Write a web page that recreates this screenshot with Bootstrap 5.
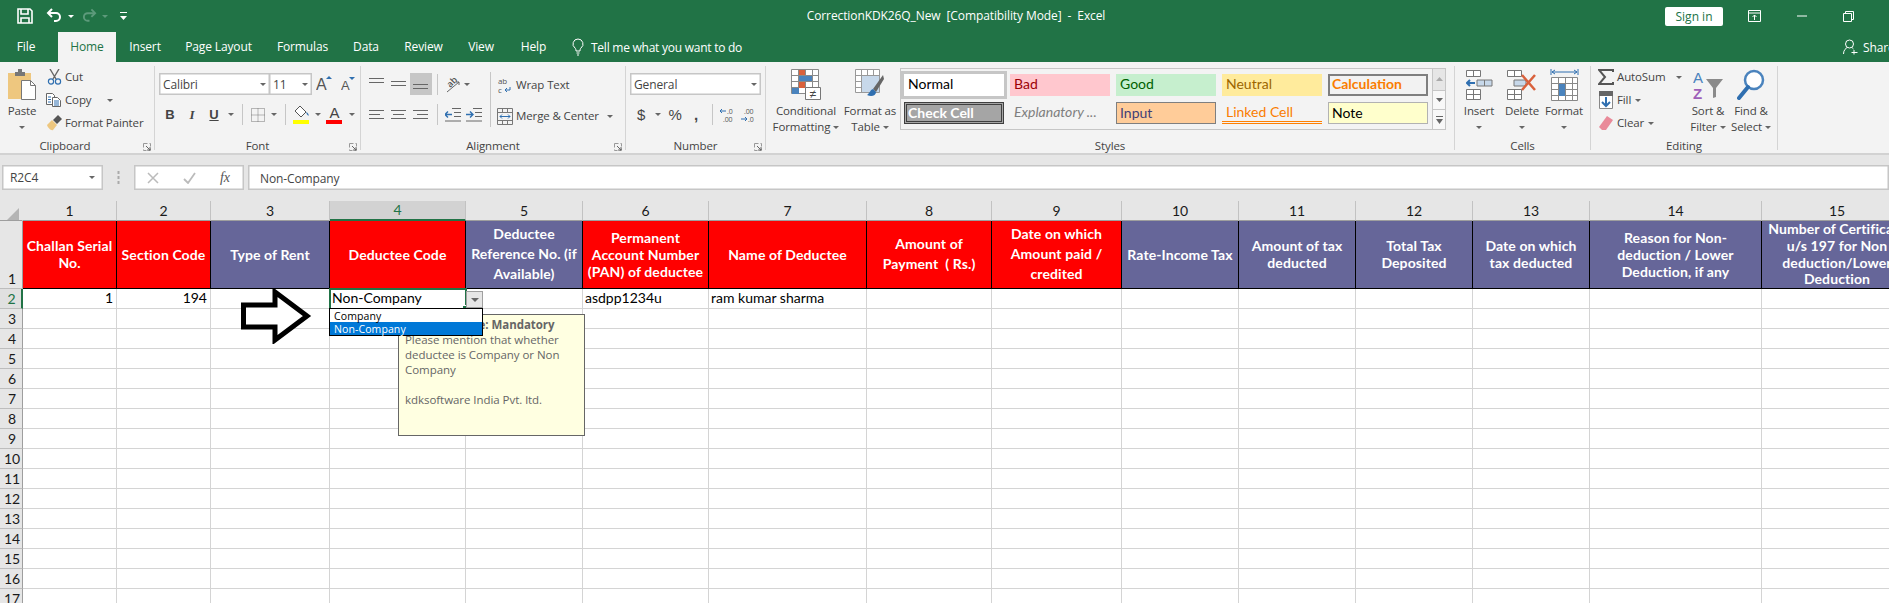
<!DOCTYPE html>
<html lang="en">
<head>
<meta charset="utf-8">
<title>CorrectionKDK26Q_New - Excel</title>
<link href="https://cdn.jsdelivr.net/npm/bootstrap@5.3.0/dist/css/bootstrap.min.css" rel="stylesheet">
<style>
html,body{height:603px;overflow:hidden;background:#fff}
body{font-family:"Open Sans","Noto Sans",sans-serif;font-size:11.5px;letter-spacing:-.12px;color:#444;width:1889px;line-height:16px}
svg{display:block;flex:none}
.tri{display:inline-block;width:0;height:0;border-left:3px solid transparent;border-right:3px solid transparent;border-top:3px solid #666;flex:none}
.tri-w{border-top-color:#fff}
.tri-d{border-top-color:#5d9a7b}
.cw-5{width:5px;flex:none}.cw-8{width:8px;flex:none}.cw-6{width:6px;flex:none}.cw-13{width:13px;flex:none}
.cw-10{width:10px}.cw-12{width:12px}.cw-18{width:18px}.cw-19{width:19px}.cw-20{width:20px}.cw-21{width:21px}.cw-22{width:22px}.cw-23{width:23px}.cw-25{width:25px}
.cw-10,.cw-12,.cw-18,.cw-19,.cw-20,.cw-21,.cw-22,.cw-23,.cw-25{display:flex;align-items:center;justify-content:center;flex:none;height:100%}
/* title */
.xl-top{background:#217346;color:#fff;height:62px}
.xl-title{height:32px;font-size:12px;letter-spacing:-.1px}
.xl-qat{width:634px;padding-left:17px}
.xl-doc{width:644px;text-align:center;line-height:28px}
.xl-signin{width:58px;height:19px;margin-left:387px;padding:0;border:0;border-radius:2px;background:#fff;color:#217346;font-size:12px;line-height:19px;letter-spacing:0}
.xl-win{width:47px;justify-content:center}
.xl-tabs{height:30px;flex-wrap:nowrap}
.xl-tabs .nav-link{color:#fff;padding:0;height:30px;line-height:29px;text-align:center;font-size:12px}
.xl-tabs .nav-link.active{background:#f3f3f3;color:#217346}
.t-file{width:52px;margin-right:6px}.t-home,.t-ins{width:58px}.t-pl{width:89px}.t-fm{width:79px}.t-da,.t-vw{width:48px}.t-rv{width:67px}.t-hp{width:57px}
.xl-tell{margin-left:8px;width:300px;color:#fff;font-size:12px;line-height:29px;letter-spacing:-.25px}
.xl-tell svg{margin-right:5px}
.xl-share{margin-left:auto;width:46px;overflow:hidden;white-space:nowrap;color:#fff;font-size:12px;line-height:29px}
.xl-share svg{margin-right:5px}
/* ribbon */
.xl-ribbon{height:93px;background:#f3f3f3;border-bottom:2px solid #d2d2d2;padding-top:4px}
.rg{flex:none;height:84px;border-right:1px solid #d4d4d4;position:relative;white-space:nowrap}
.rg-clip{width:155px}.rg-font{width:206px}.rg-align{width:265px}.rg-num{width:140px}.rg-sty{width:689px}.rg-cell{width:136px}.rg-edit{width:187px}
.rb{height:72px;display:flow-root}
.rl{height:12px;line-height:16px;text-align:center}
.launch{position:absolute;right:3px;bottom:-1px}
.big{display:flex;flex-direction:column;align-items:center;flex:none;line-height:16px;text-align:center}
.big-i{height:37px;display:flex;align-items:flex-start;padding-top:3px}
.big-l{display:flex;align-items:center;height:16px;gap:3px}
.big-c{height:16px;display:flex;align-items:center}
.w-paste{width:44px}.w-cf{width:70px;margin-left:5px}.w-ft{width:58px}.w-ins{width:42px;margin-left:3px}.w-del{width:44px}.w-fmt{width:40px}.w-sort{width:44px}.w-find{width:42px}
.sm-col{display:flex;flex-direction:column;gap:1px}
.sm{height:22px;display:flex;align-items:center}
.w-clipcol{width:111px}
.w-editcol{width:95px;padding-left:5px}
.sm .cw-20{margin-right:1px}
.r1{height:22px;margin-top:7px}
.r2{height:23px;margin-top:8px}
.cb{height:22px;background:#fff;border:1px solid #c6c6c6;display:flex;align-items:center;padding:1px 3px 0;justify-content:space-between;box-shadow:inset 0 0 0 .5px #c6c6c6;font-size:12px;font-family:"Open Sans",sans-serif}
.cb-font{width:111px;margin-left:4px}.cb-size{width:43px;margin-left:-1px}.cb-num{width:131px;margin-left:4px}
.vs{width:1px;height:21px;background:#c6c6c6}
.sel{background:#c6c6c6}
.al-l{width:129px;padding-left:5px}
.al-x{width:1px;height:55px;background:#c6c6c6;margin-top:6px;flex:none}
.al-r{padding-left:5px;padding-top:8px}
.al-r .sm{gap:2px}
.al-r .sm + .sm{margin-top:9px}
.w-mt{width:97px;display:flex;justify-content:space-between;align-items:center}
.fb{font-weight:700;font-size:13px;color:#444;font-family:"Liberation Sans",sans-serif}
.fi{font-style:italic;font-weight:700;font-size:13px;font-family:"Liberation Serif",serif}
.fu{text-decoration:underline}
.sym{font-size:15px;color:#444;font-family:"Liberation Sans",sans-serif}
/* gallery */
.gal{width:546px;height:62px;margin:2px 0 0 1px;border:1px solid #c6c6c6;display:flex;background:#f3f3f3}
.gal-g{width:531px;padding:5px 0 0 3px;display:grid;grid-template-columns:repeat(5,100px);grid-auto-rows:22px;column-gap:6px;row-gap:6px;font-family:Lato,sans-serif;font-size:14px;letter-spacing:0}
.gal-g>div{line-height:20px;padding-left:4px;overflow:hidden}
.s-n{background:#fff;color:#000;box-shadow:0 0 0 3px #c6c6c6}
.s-b{background:#ffc7ce;color:#9c0006}.s-g{background:#c6efce;color:#006100}.s-u{background:#ffeb9c;color:#9c6500}
.s-c{background:#f2f2f2;color:#fa7d00;font-weight:700;border:2px solid #7f7f7f;line-height:16px!important;padding-left:2px!important}
.s-k{background:#a5a5a5;color:#fff;font-weight:700;border:3px double #3f3f3f;line-height:16px!important;padding-left:1px!important}
.s-e{color:#7f7f7f;font-style:italic}
.s-i{background:#fc9;color:#3f3f76;border:1px solid #7f7f7f;line-height:19px!important;padding-left:3px!important}
.s-l{color:#fa7d00;border-bottom:3px double #ff8001}
.s-o{background:#ffc;color:#000;border:1px solid #b2b2b2;line-height:19px!important;padding-left:3px!important}
.gal-s{width:13px;margin-left:1px;border-left:1px solid #c6c6c6;display:flex;flex-direction:column}
.gal-s>div{flex:1;display:flex;align-items:center;justify-content:center;border-bottom:1px solid #c6c6c6;background:#f8f8f8}
.gal-s>div:first-child{background:#e6e6e6;flex:1.1}
.gal-s>div:last-child{border-bottom:0}
/* formula */
.xl-fbar{height:46px;background:#e6e6e6;padding-top:10px}
.nb{width:101px;height:25px;margin-left:2px;background:#fff;border:1px solid #c6c6c6;box-shadow:inset 0 0 0 .5px #c6c6c6;display:flex;align-items:center;justify-content:space-between;padding:0 7px;font-size:12px}
.gp{width:31px;display:flex;justify-content:center;align-items:center;height:25px}
.fxb{width:110px;height:25px;background:#fff;border:1px solid #c6c6c6;box-shadow:inset 0 0 0 .5px #c6c6c6;display:flex;align-items:center}
.fxb>div{width:36px;display:flex;justify-content:center;font-family:"Liberation Serif",serif;font-style:italic;font-size:14px;color:#555}
.fml{flex:1;height:25px;margin-left:4px;background:#fff;border:1px solid #c6c6c6;box-shadow:inset 0 0 0 .5px #c6c6c6;padding-left:11px;line-height:25px;font-size:12px}
/* sheet */
.xl-wrap{position:relative;height:402px;overflow:hidden;background:#fff}
.sheet{table-layout:fixed;width:1913px;margin:0;border-collapse:separate;border-spacing:0;font-family:Lato,sans-serif;font-size:14px;letter-spacing:0;color:#000}
.sheet col:nth-child(1){width:23px}.sheet col:nth-child(2),.sheet col:nth-child(3){width:94px}.sheet col:nth-child(4){width:119px}.sheet col:nth-child(5){width:136px}.sheet col:nth-child(6){width:117px}.sheet col:nth-child(7){width:126px}.sheet col:nth-child(8){width:158px}.sheet col:nth-child(9){width:125px}.sheet col:nth-child(10){width:130px}.sheet col:nth-child(11),.sheet col:nth-child(12),.sheet col:nth-child(13),.sheet col:nth-child(14){width:117px}.sheet col:nth-child(15){width:172px}.sheet col:nth-child(16){width:151px}
.sheet>*>tr>*{padding:0;height:20px;border:0;border-right:1px solid #d4d4d4;border-bottom:1px solid #d4d4d4;line-height:18px;vertical-align:middle;background:#fff;color:#000;box-shadow:none;overflow:hidden;white-space:nowrap}
.sheet>thead>tr>th{background:#e6e6e6;text-align:center;font-weight:400;border-right:1px solid #c2c2c2;border-bottom:1px solid #9e9e9e;color:#1a1a1a;padding-top:0}
.sheet>thead>tr>th.cor{position:relative;border-right-color:#e6e6e6}
.cor-t{display:block;width:0;height:0;margin:6px 0 0 7px;border-left:12px solid transparent;border-bottom:12px solid #b4b4b4}
.sheet>thead>tr>th.on{background:#d2d2d2;color:#217346;border-bottom:2px solid #217346}
.sheet>tbody>tr>th{background:#e6e6e6;text-align:center;font-weight:400;border-right:1px solid #9e9e9e;border-bottom:1px solid #bdbdbd;color:#1a1a1a;padding-left:2px}
.sheet>tbody>tr>th.on{color:#217346;border-right:2px solid #217346;background:#e0e0e0}
.sheet>tbody>tr.hd{height:68px}
.sheet>tbody>tr.hd>th{vertical-align:bottom;height:68px;line-height:19px}
.sheet>tbody>tr.hd>td{height:68px;border-right:1px solid #000;border-bottom:1px solid #000;color:#fff;font-weight:700;text-align:center;line-height:17px;letter-spacing:.1px;white-space:nowrap;padding-bottom:1px}
.sheet>tbody>tr.hd>td.rd{background:#f00}
.sheet>tbody>tr.hd>td.pu{background:#669}
.sheet>tbody>tr.hd>td.tl{line-height:20px}
.sheet>tbody>tr.hd>td.q4{line-height:16.75px;padding-bottom:0}
.sheet>tbody>tr>td.nr{text-align:right;padding-right:3px;padding-bottom:1px}
.sheet>tbody>tr>td.tx{padding-left:2px;padding-bottom:1px}
.sheet>tbody>tr>td.act{padding-left:2px;padding-bottom:1px;position:relative;overflow:visible;outline:2px solid #217346;outline-offset:-1px}
.fh{position:absolute;right:-3px;bottom:-3px;width:6px;height:6px;background:#217346;border:1px solid #fff}
.dd-btn{position:absolute;left:466px;top:90px;width:17px;height:17px;background:#e6e6e6;border:1px solid #a0a0a0;display:flex;align-items:center;justify-content:center}
.dd-btn .tri{border-left-width:4px;border-right-width:4px;border-top-width:4px;border-top-color:#666}
.dd-l{position:absolute;left:329px;top:107px;width:154px;height:28px;background:#fff;border:1px solid #000;font-family:"Open Sans",sans-serif;font-size:10.5px;line-height:14px;letter-spacing:.1px;color:#000;z-index:3}
.dd-l div{padding-left:4px;height:13px}
.dd-l .hit{background:#0078d7;color:#fff}
.tip{position:absolute;left:398px;top:113px;width:187px;height:122px;background:#ffffe1;border:1px solid #666;color:#666;padding:2px 6px;font-family:"Open Sans",sans-serif;font-size:11.5px;line-height:15px;letter-spacing:-.05px;z-index:2}
.tip b{display:block;padding-left:52px;font-weight:700}
.tip p{margin:0 0 15px}
.arr{position:absolute;left:240px;top:87px;z-index:1}
</style>
</head>
<body>
<svg class="d-none" width="0" height="0">
<symbol id="lA" viewBox="0 0 16 12"><path d="M0 1.5h15M0 5.5h11M0 9.5h15" stroke="#666" fill="none"/></symbol>
<symbol id="cA" viewBox="0 0 16 12"><path d="M0 1.5h15M2 5.5h11M0 9.5h15" stroke="#666" fill="none"/></symbol>
<symbol id="rA" viewBox="0 0 16 12"><path d="M0 1.5h15M4 5.5h11M0 9.5h15" stroke="#666" fill="none"/></symbol>
<symbol id="lc" viewBox="0 0 8 8"><path d="M.5 .5h7v7h-7z" fill="none" stroke="#999" stroke-dasharray="4 2"/><path d="M3 3l4 4M7 4v3H4" fill="none" stroke="#666"/></symbol>
</svg>

<header class="xl-top">
  <div class="xl-title d-flex align-items-center">
    <div class="xl-qat d-flex align-items-center">
      <svg width="16" height="16" viewBox="0 0 16 16"><path d="M1 1h12l2 2v12H1z" fill="none" stroke="#fff" stroke-width="1.6"/><path d="M4 1v5h7V1M4 15v-5h8v5" fill="none" stroke="#fff" stroke-width="1.6"/></svg>
      <div class="cw-13"></div>
      <svg width="16" height="16" viewBox="0 0 16 16"><path d="M3 5h7a4 4 0 0 1 0 8H8" fill="none" stroke="#fff" stroke-width="2"/><path d="M6 1L2 5l4 4" fill="none" stroke="#fff" stroke-width="2"/></svg>
      <div class="cw-6"></div><span class="tri tri-w"></span>
      <div class="cw-8"></div>
      <svg width="15" height="16" viewBox="0 0 16 16"><path d="M13 5H6a4 4 0 0 0 0 8h2" fill="none" stroke="#5d9a7b" stroke-width="2"/><path d="M10 1l4 4-4 4" fill="none" stroke="#5d9a7b" stroke-width="2"/></svg>
      <div class="cw-5"></div><span class="tri tri-d"></span>
      <div class="cw-12"></div>
      <svg width="7" height="9" viewBox="0 0 7 9"><path d="M0 .5h7" stroke="#fff"/><path d="M0 4h7L3.500 8z" fill="#fff"/></svg>
    </div>
    <div class="xl-doc">CorrectionKDK26Q_New&nbsp; [Compatibility Mode]&nbsp; -&nbsp; Excel</div>
    <button class="btn xl-signin" type="button">Sign in</button>
    <div class="d-flex align-items-center ms-2">
      <div class="xl-win d-flex"><svg width="13" height="13" viewBox="0 0 13 13"><path d="M.5 .5h12v11H.5zM.5 3h12" fill="none" stroke="#fff"/><path d="M6.500 10V5M4.500 7l2-2 2 2" fill="none" stroke="#fff"/></svg></div>
      <div class="xl-win d-flex"><svg width="10" height="2" viewBox="0 0 10 2"><path d="M0 1h10" stroke="#fff"/></svg></div>
      <div class="xl-win d-flex"><svg width="11" height="11" viewBox="0 0 11 11"><path d="M.5 2.500h8v8h-8zM2.500 2.500v-2h8v8h-2" fill="none" stroke="#fff"/></svg></div>
    </div>
  </div>
  <div class="d-flex align-items-center">
    <ul class="nav xl-tabs">
      <li class="nav-item"><a class="nav-link t-file" href="#">File</a></li>
      <li class="nav-item"><a class="nav-link t-home active" href="#">Home</a></li>
      <li class="nav-item"><a class="nav-link t-ins" href="#">Insert</a></li>
      <li class="nav-item"><a class="nav-link t-pl" href="#">Page Layout</a></li>
      <li class="nav-item"><a class="nav-link t-fm" href="#">Formulas</a></li>
      <li class="nav-item"><a class="nav-link t-da" href="#">Data</a></li>
      <li class="nav-item"><a class="nav-link t-rv" href="#">Review</a></li>
      <li class="nav-item"><a class="nav-link t-vw" href="#">View</a></li>
      <li class="nav-item"><a class="nav-link t-hp" href="#">Help</a></li>
    </ul>
    <div class="xl-tell d-flex align-items-center">
      <svg width="16" height="18" viewBox="0 0 12 18"><path d="M6 1a5 5 0 0 0-3 9c.7.7 1 1.500 1 3h4c0-1.500.3-2.300 1-3A5 5 0 0 0 6 1zM4.500 15h3M5 17h2" fill="none" stroke="#fff"/></svg>
      <span>Tell me what you want to do</span>
    </div>
    <div class="xl-share d-flex align-items-center">
      <svg width="15" height="16" viewBox="0 0 15 16"><circle cx="6.500" cy="5" r="4" fill="none" stroke="#fff"/><path d="M.5 15c0-4 2.500-6 4-6.500M8.500 8.500c.7.300 1.500.8 2 1.500M11 11v4.500M8.500 13.500h6" fill="none" stroke="#fff"/></svg>
      <span>Share</span>
    </div>
  </div>
</header>

<section class="xl-ribbon d-flex">
  <div class="rg rg-clip">
    <div class="rb d-flex">
      <div class="big w-paste">
        <div class="big-i"><svg width="30" height="32" viewBox="0 0 30 32"><path d="M1 4h23v26H1z" fill="#eec77f"/><path d="M8 3h3V0h4v3h3v4H8z" fill="#777"/><path d="M14.500 11.500h9l5 5v14h-14z" fill="#fff" stroke="#777"/><path d="M23.500 11.500v5h5" fill="none" stroke="#777"/></svg></div>
        <div class="big-l">Paste</div>
        <div class="big-c"><span class="tri"></span></div>
      </div>
      <div class="sm-col w-clipcol">
        <div class="sm"><div class="cw-20"><svg width="15" height="16" viewBox="0 0 15 16"><path d="M3 0l6 10M12 0L6 10" stroke="#666" stroke-width="1.400" fill="none"/><circle cx="4" cy="12.500" r="2.600" fill="none" stroke="#2f6fb0" stroke-width="1.200"/><circle cx="11" cy="12.500" r="2.600" fill="none" stroke="#2f6fb0" stroke-width="1.200"/></svg></div>Cut</div>
        <div class="sm"><div class="cw-20"><svg width="16" height="14" viewBox="0 0 16 14"><path d="M.5.5h6l2 2v9h-8z" fill="#fff" stroke="#666"/><path d="M6.500 4.500h5l3 3v6h-8z" fill="#fff" stroke="#666"/><path d="M2 4h3M2 6.500h3M2 9h3M8 8h5M8 10h5M8 12h5" stroke="#2f6fb0"/></svg></div>Copy<span class="tri ms-3"></span></div>
        <div class="sm"><div class="cw-20"><svg width="17" height="17" viewBox="0 0 17 17"><path d="M6 5l5 5-4 5c-2 1-5-2-6-5z" fill="#eec77f"/><path d="M7 5l4-4 1-1 4 4-1 1-4 4z" fill="#555"/></svg></div>Format Painter</div>
      </div>
    </div>
    <div class="rl pe-4">Clipboard</div>
    <svg class="launch" width="8" height="8"><use href="#lc"/></svg>
  </div>

  <div class="rg rg-font">
    <div class="rb">
      <div class="r1 d-flex">
        <div class="cb cb-font"><span>Calibri</span><span class="tri"></span></div>
        <div class="cb cb-size"><span>11</span><span class="tri"></span></div>
        <div class="cw-25"><svg width="17" height="22" viewBox="0 0 17 22"><text x="0" y="17" font-family="Liberation Sans" font-size="16" fill="#555">A</text><path d="M10 6l3-3 3 3z" fill="#2f6fb0"/></svg></div>
        <div class="cw-23"><svg width="15" height="22" viewBox="0 0 15 22"><text x="0" y="17" font-family="Liberation Sans" font-size="13" fill="#555">A</text><path d="M8 4h6l-3 3z" fill="#2f6fb0"/></svg></div>
      </div>
      <div class="r2 d-flex ps-1 align-items-center">
        <div class="cw-22"><span class="fb">B</span></div>
        <div class="cw-22"><span class="fi">I</span></div>
        <div class="cw-22"><span class="fb fu">U</span></div>
        <div class="cw-12"><span class="tri"></span></div>
        <div class="cw-10"><div class="vs"></div></div>
        <div class="cw-21"><svg width="14" height="14" viewBox="0 0 14 14"><path d="M.5.500h13v13H.5zM7 .5v13M.5 7h13" fill="none" stroke="#777" stroke-dasharray="1 1"/></svg></div>
        <div class="cw-12"><span class="tri"></span></div>
        <div class="cw-10"><div class="vs"></div></div>
        <div class="cw-23"><svg width="17" height="19" viewBox="0 0 17 19"><path d="M7 1l6 6-5 5-6-6z" fill="#fff" stroke="#555"/><path d="M13 7c2 1 3 2 2.500 4-1-1-2-2-2.500-4z" fill="#2f6fb0"/><path d="M0 15h16v4H0z" fill="#ff0"/></svg></div>
        <div class="cw-10"><span class="tri"></span></div>
        <div class="cw-23"><svg width="17" height="19" viewBox="0 0 17 19"><text x="8.500" y="13" text-anchor="middle" font-family="Liberation Sans" font-size="15" fill="#444">A</text><path d="M0 15h16v4H0z" fill="#f00"/></svg></div>
        <div class="cw-12"><span class="tri"></span></div>
      </div>
    </div>
    <div class="rl">Font</div>
    <svg class="launch" width="8" height="8"><use href="#lc"/></svg>
  </div>

  <div class="rg rg-align">
    <div class="rb d-flex">
      <div class="al-l">
        <div class="r1 d-flex">
          <div class="cw-22"><svg width="16" height="12" viewBox="0 0 16 12"><path d="M0 .5h15M0 4.500h15" stroke="#666"/></svg></div>
          <div class="cw-22"><svg width="16" height="12" viewBox="0 0 16 12"><path d="M0 3.500h15M0 7.500h15" stroke="#666"/></svg></div>
          <div class="cw-22 sel"><svg width="16" height="12" viewBox="0 0 16 12"><path d="M0 6.500h15M0 10.500h15" stroke="#666"/></svg></div>
          <div class="cw-10"><div class="vs"></div></div>
          <div class="cw-20"><svg width="17" height="17" viewBox="0 0 17 17"><text x="3" y="10" transform="rotate(-45 7 7)" font-family="Open Sans" font-size="9" font-weight="600" fill="#555">ab</text><path d="M3 16L15 6M15 6h-3M15 6v3" stroke="#666" fill="none"/></svg></div>
          <div class="cw-10"><span class="tri"></span></div>
        </div>
        <div class="r2 d-flex">
          <div class="cw-22"><svg width="16" height="12"><use href="#lA"/></svg></div>
          <div class="cw-22"><svg width="16" height="12"><use href="#cA"/></svg></div>
          <div class="cw-22"><svg width="16" height="12"><use href="#rA"/></svg></div>
          <div class="cw-10"><div class="vs"></div></div>
          <div class="cw-21"><svg width="16" height="14" viewBox="0 0 16 14"><path d="M7 .5h9M9 4.500h7M9 8.500h7M0 13h16" stroke="#666" fill="none"/><path d="M0 6.500h7M3 3.500l-3 3 3 3" stroke="#2f6fb0" stroke-width="1.400" fill="none"/></svg></div>
          <div class="cw-21"><svg width="16" height="14" viewBox="0 0 16 14"><path d="M7 .5h9M9 4.500h7M9 8.500h7M0 13h16" stroke="#666" fill="none"/><path d="M0 6.500h7M4 3.500l3 3-3 3" stroke="#2f6fb0" stroke-width="1.400" fill="none"/></svg></div>
        </div>
      </div>
      <div class="al-x"></div>
      <div class="al-r">
        <div class="sm"><div class="cw-18"><svg width="16" height="20" viewBox="0 0 16 20"><text x="1" y="9" font-family="Open Sans" font-size="8" fill="#555">ab</text><text x="1" y="18" font-family="Open Sans" font-size="8" fill="#555">c</text><path d="M13 12v3H8M10 13l-2 2 2 2" fill="none" stroke="#2f6fb0"/></svg></div>Wrap Text</div>
        <div class="sm"><div class="cw-18"><svg width="17" height="17" viewBox="0 0 17 17"><path d="M.5.500h15v16H.5zM.5 4.500h15M.5 12.500h15M5.500.5v4M10.500.5v4M5.500 12.500v4M10.500 12.500v4" fill="none" stroke="#777"/><path d="M3 8.500h10M5 6.500l-2 2 2 2M11 6.500l2 2-2 2" fill="none" stroke="#2f6fb0"/></svg></div><div class="w-mt"><span>Merge &amp; Center</span><span class="tri"></span></div></div>
      </div>
    </div>
    <div class="rl">Alignment</div>
    <svg class="launch" width="8" height="8"><use href="#lc"/></svg>
  </div>

  <div class="rg rg-num">
    <div class="rb">
      <div class="r1 d-flex"><div class="cb cb-num"><span>General</span><span class="tri"></span></div></div>
      <div class="r2 d-flex ps-1">
        <div class="cw-22"><span class="sym">$</span></div>
        <div class="cw-12"><span class="tri"></span></div>
        <div class="cw-22"><span class="sym">%</span></div>
        <div class="cw-20"><span class="sym fw-bold">,</span></div>
        <div class="cw-12"><div class="vs"></div></div>
        <div class="cw-19"><svg width="18" height="18" viewBox="0 0 18 18"><path d="M1 5h6M3 3L1 5l2 2" fill="none" stroke="#2f6fb0"/><text x="8" y="8" font-family="Open Sans" font-size="7" fill="#555">.0</text><text x="4" y="16" font-family="Open Sans" font-size="7" fill="#555">.00</text></svg></div>
        <div class="cw-23"><svg width="18" height="18" viewBox="0 0 18 18"><text x="4" y="8" font-family="Open Sans" font-size="7" fill="#555">.00</text><path d="M1 13h6M5 11l2 2-2 2" fill="none" stroke="#2f6fb0"/><text x="8" y="16" font-family="Open Sans" font-size="7" fill="#555">.0</text></svg></div>
      </div>
    </div>
    <div class="rl">Number</div>
    <svg class="launch" width="8" height="8"><use href="#lc"/></svg>
  </div>

  <div class="rg rg-sty">
    <div class="rb d-flex">
      <div class="big w-cf">
        <div class="big-i"><svg width="30" height="31" viewBox="0 0 30 31"><path d="M.5.500h27v24H.5zM.5 6.500h27M.5 12.500h27M.5 18.500h27M7.500.5v24M14.500.5v24M21.500.5v24" fill="#fff" stroke="#8a8a8a"/><path d="M8 1h6v5H8zM8 13h6v6H8z" fill="#d9613c"/><path d="M8 7h13v5H8zM1 19h7v6H1z" fill="#4a83bd"/><path d="M14.500 18.500h15v12h-15z" fill="#fff" stroke="#777"/><text x="22" y="29" text-anchor="middle" font-family="Liberation Sans" font-size="12" fill="#444">≠</text></svg></div>
        <div class="big-l">Conditional</div>
        <div class="big-l">Formatting<span class="tri"></span></div>
      </div>
      <div class="big w-ft">
        <div class="big-i"><svg width="30" height="31" viewBox="0 0 30 31"><path d="M.5.500h24v23H.5zM.5 6.500h24M.5 12.500h24M.5 18.500h24M6.500.5v23M12.500.5v23M18.500.5v23" fill="#fff" stroke="#999"/><path d="M7 7h17v16H7z" fill="#c7d8ea"/><path d="M28 6L18 20l3 3 8-13z" fill="#666"/><path d="M18 20c-3 1-3 4-6 6 4 2 9 1 9-3z" fill="#2f6fb0"/></svg></div>
        <div class="big-l">Format as</div>
        <div class="big-l">Table<span class="tri"></span></div>
      </div>
      <div class="gal">
        <div class="gal-g">
          <div class="s-n">Normal</div><div class="s-b">Bad</div><div class="s-g">Good</div><div class="s-u">Neutral</div><div class="s-c">Calculation</div>
          <div class="s-k">Check Cell</div><div class="s-e">Explanatory ...</div><div class="s-i">Input</div><div class="s-l">Linked Cell</div><div class="s-o">Note</div>
        </div>
        <div class="gal-s">
          <div><svg width="7" height="4" viewBox="0 0 7 4"><path d="M0 4L3.500 0 7 4z" fill="#aaa"/></svg></div>
          <div><svg width="7" height="4" viewBox="0 0 7 4"><path d="M0 0l3.500 4L7 0z" fill="#666"/></svg></div>
          <div><svg width="7" height="8" viewBox="0 0 7 8"><path d="M0 .5h7" stroke="#666"/><path d="M0 3h7L3.500 8z" fill="#666"/></svg></div>
        </div>
      </div>
    </div>
    <div class="rl">Styles</div>
  </div>

  <div class="rg rg-cell">
    <div class="rb d-flex">
      <div class="big w-ins">
        <div class="big-i"><svg width="27" height="31" viewBox="0 0 27 31"><path d="M.5 1.500h14v6H.5zM7.500 1.500v6M.5 20.500h14v10H.5zM7.500 20.500v10M.5 25.500h14" fill="#fff" stroke="#777"/><path d="M11 11h15v6H11zM18.500 11v6" fill="#c7d8ea" stroke="#777"/><path d="M1 14h8M4 11l-3 3 3 3" fill="none" stroke="#2f6fb0" stroke-width="2"/></svg></div>
        <div class="big-l">Insert</div>
        <div class="big-c"><span class="tri"></span></div>
      </div>
      <div class="big w-del">
        <div class="big-i"><svg width="30" height="31" viewBox="0 0 30 31"><path d="M.5 1.500h14v6H.5zM7.500 1.500v6M.5 20.500h14v10H.5zM7.500 20.500v10M.5 25.500h14" fill="#fff" stroke="#777"/><path d="M7 11h12v6H7z" fill="#c7d8ea" stroke="#777"/><path d="M15 6l13 15M28 6L15 21" stroke="#d9613c" stroke-width="2.500"/></svg></div>
        <div class="big-l">Delete</div>
        <div class="big-c"><span class="tri"></span></div>
      </div>
      <div class="big w-fmt">
        <div class="big-i"><svg width="29" height="34" viewBox="0 0 29 34"><path d="M1 0v6M28 0v6M2 3h25M5 1L2 3l3 2M24 1l3 2-3 2" fill="none" stroke="#2f6fb0"/><path d="M1.500 8.500h26v23h-26zM1.500 14.500h26M1.500 20.500h26M1.500 26.500h26M8.500 8.500v23M15.500 8.500v23M22.500 8.500v23" fill="#fff" stroke="#888"/><path d="M9 15h6v12H9z" fill="#4a83bd"/></svg></div>
        <div class="big-l">Format</div>
        <div class="big-c"><span class="tri"></span></div>
      </div>
    </div>
    <div class="rl">Cells</div>
  </div>

  <div class="rg rg-edit">
    <div class="rb d-flex">
      <div class="sm-col w-editcol">
        <div class="sm"><div class="cw-20"><svg width="16" height="16" viewBox="0 0 16 16"><path d="M15 3V1H1l6 7-6 7h14v-2" fill="none" stroke="#555" stroke-width="2"/></svg></div>AutoSum<span class="tri ms-auto me-1"></span></div>
        <div class="sm"><div class="cw-20"><svg width="14" height="18" viewBox="0 0 14 18"><path d="M.5.5h13v17H.5z" fill="#fff" stroke="#888"/><path d="M0 0h14v5H0z" fill="#666"/><path d="M7 6v9M3 11l4 4 4-4" fill="none" stroke="#2f6fb0" stroke-width="2"/></svg></div>Fill<span class="tri ms-1"></span></div>
        <div class="sm"><div class="cw-20"><svg width="14" height="15" viewBox="0 0 14 15"><path d="M8 0l6 4-7 10H3L0 11z" fill="#e98a99"/></svg></div>Clear<span class="tri ms-1"></span></div>
      </div>
      <div class="big w-sort">
        <div class="big-i"><svg width="30" height="33" viewBox="0 0 30 33"><text x="0" y="14" font-family="Liberation Sans" font-size="15" fill="#4a83bd">A</text><text x="0" y="30" font-family="Liberation Sans" font-size="15" font-weight="700" fill="#9e5fb8">Z</text><path d="M13 10h17l-7 9v9l-3 1V19z" fill="#8a8a8a"/></svg></div>
        <div class="big-l">Sort &amp;</div>
        <div class="big-l">Filter<span class="tri"></span></div>
      </div>
      <div class="big w-find">
        <div class="big-i"><svg width="28" height="33" viewBox="0 0 28 33"><circle cx="17" cy="11" r="9" fill="#fff" stroke="#4a83bd" stroke-width="2.500"/><path d="M11 18L2 29" stroke="#2f6fb0" stroke-width="4" stroke-linecap="round"/></svg></div>
        <div class="big-l">Find &amp;</div>
        <div class="big-l">Select<span class="tri"></span></div>
      </div>
    </div>
    <div class="rl">Editing</div>
  </div>
</section>

<section class="xl-fbar d-flex">
  <div class="nb"><span>R2C4</span><span class="tri"></span></div>
  <div class="gp"><svg width="3" height="13" viewBox="0 0 3 13"><path d="M1.500 0v3M1.500 5v3M1.500 10v3" stroke="#aaa" stroke-width="2"/></svg></div>
  <div class="fxb">
    <div><svg width="12" height="12" viewBox="0 0 12 12"><path d="M1 1l10 10M11 1L1 11" stroke="#bbb" stroke-width="1.500"/></svg></div>
    <div><svg width="13" height="12" viewBox="0 0 13 12"><path d="M1 7l4 4 7-10" stroke="#bbb" stroke-width="1.800" fill="none"/></svg></div>
    <div>fx</div>
  </div>
  <div class="fml">Non-Company</div>
</section>

<main class="xl-wrap">
  <table class="table sheet">
    <colgroup><col><col><col><col><col><col><col><col><col><col><col><col><col><col><col><col></colgroup>
    <thead>
      <tr><th class="cor"><span class="cor-t"></span></th><th>1</th><th>2</th><th>3</th><th class="on">4</th><th>5</th><th>6</th><th>7</th><th>8</th><th>9</th><th>10</th><th>11</th><th>12</th><th>13</th><th>14</th><th>15</th></tr>
    </thead>
    <tbody>
      <tr class="hd"><th>1</th>
        <td class="rd">Challan Serial<br>No.</td>
        <td class="rd">Section Code</td>
        <td class="pu">Type of Rent</td>
        <td class="rd">Deductee Code</td>
        <td class="pu tl">Deductee<br>Reference No. (if<br>Available)</td>
        <td class="rd">Permanent<br>Account Number<br>(PAN) of deductee</td>
        <td class="rd">Name of Deductee</td>
        <td class="rd tl">Amount of<br>Payment&nbsp; ( Rs.)</td>
        <td class="rd tl">Date on which<br>Amount paid /<br>credited</td>
        <td class="pu">Rate-Income Tax</td>
        <td class="pu">Amount of tax<br>deducted</td>
        <td class="pu">Total Tax<br>Deposited</td>
        <td class="pu">Date on which<br>tax deducted</td>
        <td class="pu">Reason for Non-<br>deduction / Lower<br>Deduction, if any</td>
        <td class="pu q4">Number of Certificate<br>u/s 197 for Non<br>deduction/Lower<br>Deduction</td>
      </tr>
      <tr><th class="on">2</th><td class="nr">1</td><td class="nr">194</td><td></td><td class="act">Non-Company<span class="fh"></span></td><td></td><td class="tx">asdpp1234u</td><td class="tx">ram kumar sharma</td><td></td><td></td><td></td><td></td><td></td><td></td><td></td><td></td></tr>
      <tr><th>3</th><td></td><td></td><td></td><td></td><td></td><td></td><td></td><td></td><td></td><td></td><td></td><td></td><td></td><td></td><td></td></tr>
      <tr><th>4</th><td></td><td></td><td></td><td></td><td></td><td></td><td></td><td></td><td></td><td></td><td></td><td></td><td></td><td></td><td></td></tr>
      <tr><th>5</th><td></td><td></td><td></td><td></td><td></td><td></td><td></td><td></td><td></td><td></td><td></td><td></td><td></td><td></td><td></td></tr>
      <tr><th>6</th><td></td><td></td><td></td><td></td><td></td><td></td><td></td><td></td><td></td><td></td><td></td><td></td><td></td><td></td><td></td></tr>
      <tr><th>7</th><td></td><td></td><td></td><td></td><td></td><td></td><td></td><td></td><td></td><td></td><td></td><td></td><td></td><td></td><td></td></tr>
      <tr><th>8</th><td></td><td></td><td></td><td></td><td></td><td></td><td></td><td></td><td></td><td></td><td></td><td></td><td></td><td></td><td></td></tr>
      <tr><th>9</th><td></td><td></td><td></td><td></td><td></td><td></td><td></td><td></td><td></td><td></td><td></td><td></td><td></td><td></td><td></td></tr>
      <tr><th>10</th><td></td><td></td><td></td><td></td><td></td><td></td><td></td><td></td><td></td><td></td><td></td><td></td><td></td><td></td><td></td></tr>
      <tr><th>11</th><td></td><td></td><td></td><td></td><td></td><td></td><td></td><td></td><td></td><td></td><td></td><td></td><td></td><td></td><td></td></tr>
      <tr><th>12</th><td></td><td></td><td></td><td></td><td></td><td></td><td></td><td></td><td></td><td></td><td></td><td></td><td></td><td></td><td></td></tr>
      <tr><th>13</th><td></td><td></td><td></td><td></td><td></td><td></td><td></td><td></td><td></td><td></td><td></td><td></td><td></td><td></td><td></td></tr>
      <tr><th>14</th><td></td><td></td><td></td><td></td><td></td><td></td><td></td><td></td><td></td><td></td><td></td><td></td><td></td><td></td><td></td></tr>
      <tr><th>15</th><td></td><td></td><td></td><td></td><td></td><td></td><td></td><td></td><td></td><td></td><td></td><td></td><td></td><td></td><td></td></tr>
      <tr><th>16</th><td></td><td></td><td></td><td></td><td></td><td></td><td></td><td></td><td></td><td></td><td></td><td></td><td></td><td></td><td></td></tr>
      <tr><th>17</th><td></td><td></td><td></td><td></td><td></td><td></td><td></td><td></td><td></td><td></td><td></td><td></td><td></td><td></td><td></td></tr>
    </tbody>
  </table>
  <svg class="arr" width="72" height="56" viewBox="0 0 72 56"><path d="M3.500 17H35V4l32 24-32 24V39H3.500z" fill="#fff" stroke="#000" stroke-width="5"/></svg>
  <div class="dd-btn"><span class="tri"></span></div>
  <div class="tip"><b>Code: Mandatory</b><p>Please mention that whether<br>deductee is Company or Non<br>Company</p><p>kdksoftware India Pvt. ltd.</p></div>
  <div class="dd-l"><div>Company</div><div class="hit">Non-Company</div></div>
</main>
</body>
</html>
